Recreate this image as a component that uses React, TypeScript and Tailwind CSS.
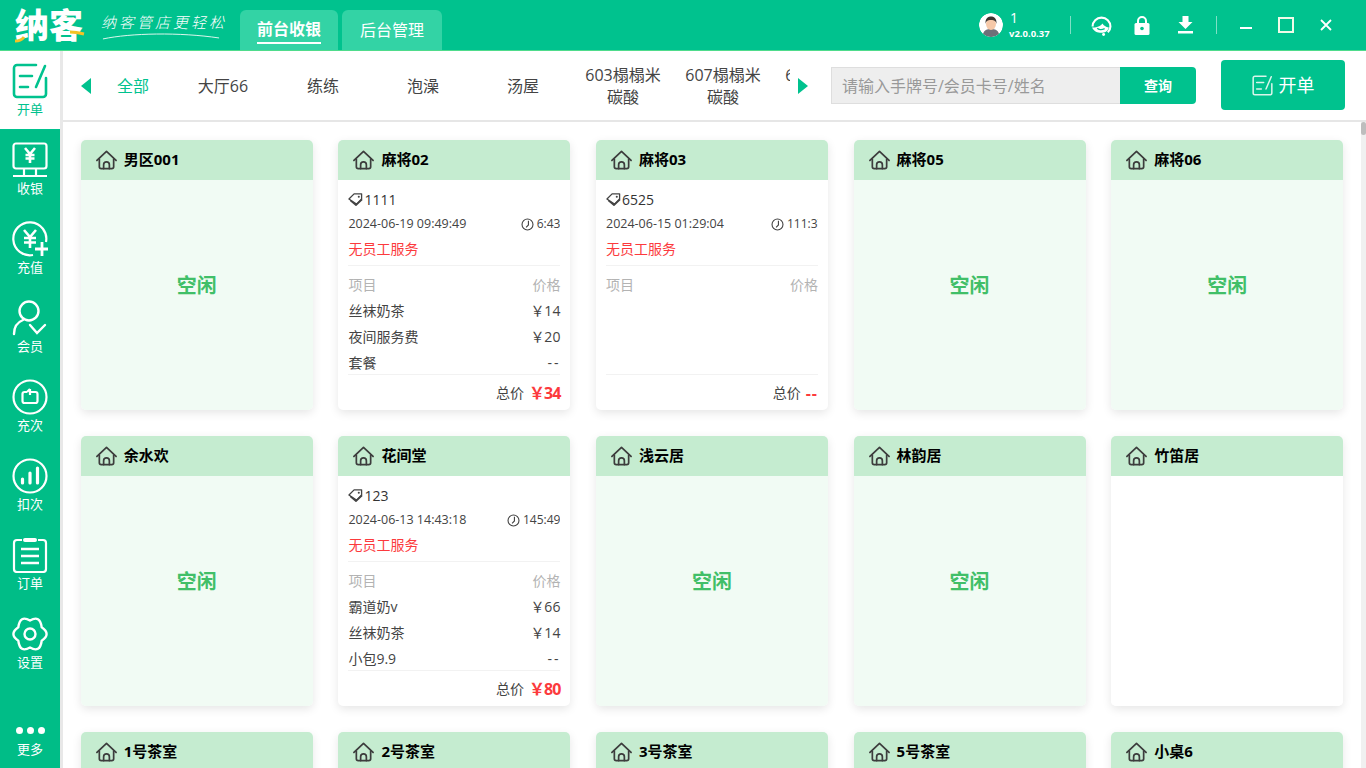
import React from 'react';

const font = { fontFamily: '"Open Sans", "Noto Sans CJK SC", sans-serif' };

interface IconPropsI {
  className?: string;
}

const OrderIcon: React.FC<IconPropsI> = ({ className }) => (
  <svg viewBox="0 0 36 36" className={className} fill="none" stroke="currentColor" strokeWidth="2.6" strokeLinecap="round" strokeLinejoin="round">
    <path d="M24 2H5a3 3 0 0 0-3 3v26a3 3 0 0 0 3 3h26a3 3 0 0 0 3-3V15" />
    <path d="M8 13h12M8 24h8M33 3l-9 21" />
  </svg>
);

const CashIcon: React.FC<IconPropsI> = ({ className }) => (
  <svg viewBox="0 0 36 36" className={className} fill="none" stroke="currentColor" strokeWidth="2.2">
    <rect x="1.500" y="1.500" width="33" height="25" rx="2.500" />
    <path d="M1 34h34M12 27v7M24 27v7" />
    <path d="M13 6l5 6 5-6M18 12v9M13.500 13h9M13.500 16.500h9" strokeWidth="2.600" />
  </svg>
);

const RechargeIcon: React.FC<IconPropsI> = ({ className }) => (
  <svg viewBox="0 0 36 36" className={className} fill="none" stroke="currentColor" strokeWidth="2.2">
    <path d="M21 34a16.500 16.500 0 1 1 13-13" />
    <path d="M12 9l6 7 6-7M18 16v11M12 17h12M12 21.500h12" strokeWidth="2.600" />
    <path d="M30 21v14M23 28h13" strokeWidth="2.800" />
  </svg>
);

const MemberIcon: React.FC<IconPropsI> = ({ className }) => (
  <svg viewBox="0 0 36 36" className={className} fill="none" stroke="currentColor" strokeWidth="2.400" strokeLinecap="round">
    <circle cx="17" cy="11" r="9.500" />
    <path d="M2 34c0-8 4-12 9-14M18 25l7 8 8-8" />
  </svg>
);

const TimesIcon: React.FC<IconPropsI> = ({ className }) => (
  <svg viewBox="0 0 36 36" className={className} fill="none" stroke="currentColor" strokeWidth="2.200">
    <circle cx="18" cy="18" r="16.500" />
    <path d="M15 13h-2.500a2 2 0 0 0-2 2v7a2 2 0 0 0 2 2h11a2 2 0 0 0 2-2v-7a2 2 0 0 0-2-2H18" />
    <path d="M18 10v6M18 10l-3 3" />
  </svg>
);

const DeductIcon: React.FC<IconPropsI> = ({ className }) => (
  <svg viewBox="0 0 36 36" className={className} fill="none" stroke="currentColor" strokeWidth="2.200">
    <circle cx="18" cy="18" r="16.500" />
    <path d="M10.500 21v4M18 15v10M25.500 10v15" strokeWidth="3.200" strokeLinecap="round" />
  </svg>
);

const ListIcon: React.FC<IconPropsI> = ({ className }) => (
  <svg viewBox="0 0 36 36" className={className} fill="none" stroke="currentColor" strokeWidth="2.200">
    <path d="M10 3H5a3 3 0 0 0-3 3v26a3 3 0 0 0 3 3h26a3 3 0 0 0 3-3V6a3 3 0 0 0-3-3h-5" />
    <path d="M13 3h10" strokeWidth="4" strokeLinecap="round" />
    <path d="M9 12h18M9 19h18M9 26h18" strokeWidth="2.400" />
  </svg>
);

const GearIcon: React.FC<IconPropsI> = ({ className }) => (
  <svg viewBox="0 0 36 36" className={className} fill="none" stroke="currentColor" strokeWidth="2.400" strokeLinejoin="round">
    <path d="M18 4.500Q28 -1.500 29.700 11.250 39.500 18 29.700 24.750 28 37.500 18 31.500 8 37.500 6.300 24.750-3.500 18 6.300 11.250 8-1.500 18 4.500z" />
    <circle cx="18" cy="18" r="5.500" />
  </svg>
);

const HomeIcon: React.FC<IconPropsI> = ({ className }) => (
  <svg viewBox="0 0 22 20" className={className} fill="none" stroke="#3d3d3d" strokeWidth="1.800" strokeLinecap="round" strokeLinejoin="round">
    <path d="M1 10.500 11 1l10 9.500" />
    <path d="M3.500 9v8a2 2 0 0 0 2 2h11a2 2 0 0 0 2-2V9" />
    <path d="M8 19v-4a3 3 0 0 1 6 0v4" />
  </svg>
);

const TagIcon: React.FC = () => (
  <svg viewBox="0 0 16 14" className="w-[15px] h-[14px] shrink-0" fill="none" stroke="#444" strokeLinejoin="round">
    <path d="M1 7 6.500 1.500h8V7L9 12.500z" strokeWidth="1.400" />
    <path d="M2.500 8.500 8.500 13.500 15 7.500" strokeWidth="1.800" />
    <circle cx="11.500" cy="4.500" r="1.100" fill="#444" stroke="none" />
  </svg>
);

const ClockIcon: React.FC = () => (
  <svg viewBox="0 0 14 14" className="w-[13px] h-[13px] shrink-0" fill="none" stroke="#444" strokeWidth="1.200">
    <circle cx="7" cy="7" r="5.900" />
    <path d="M8 3v4.500L5.500 10" />
  </svg>
);

const sideItems = [
  { label: '收银', icon: CashIcon },
  { label: '充值', icon: RechargeIcon },
  { label: '会员', icon: MemberIcon },
  { label: '充次', icon: TimesIcon },
  { label: '扣次', icon: DeductIcon },
  { label: '订单', icon: ListIcon },
  { label: '设置', icon: GearIcon },
];

const tabs = ['大厅66', '练练', '泡澡', '汤屋', '603榻榻米碳酸', '607榻榻米碳酸', '608榻榻米碳酸'];

interface RoomI {
  name: string;
  status?: 'idle' | 'blank';
  tag?: string;
  start?: string;
  time?: string;
  clipTime?: boolean;
  items?: [string, string][];
  total?: string;
}

const rooms: RoomI[] = [
  { name: '男区001', status: 'idle' },
  {
    name: '麻将02',
    tag: '1111',
    start: '2024-06-19 09:49:49',
    time: '6:43',
    items: [['丝袜奶茶', '￥14'], ['夜间服务费', '￥20'], ['套餐', '--']],
    total: '￥34',
  },
  { name: '麻将03', tag: '6525', start: '2024-06-15 01:29:04', time: '111:37', clipTime: true, items: [], total: '--' },
  { name: '麻将05', status: 'idle' },
  { name: '麻将06', status: 'idle' },
  { name: '余水欢', status: 'idle' },
  {
    name: '花间堂',
    tag: '123',
    start: '2024-06-13 14:43:18',
    time: '145:49',
    items: [['霸道奶v', '￥66'], ['丝袜奶茶', '￥14'], ['小包9.9', '--']],
    total: '￥80',
  },
  { name: '浅云居', status: 'idle' },
  { name: '林韵居', status: 'idle' },
  { name: '竹笛居', status: 'blank' },
  { name: '1号茶室', status: 'idle' },
  { name: '2号茶室', status: 'idle' },
  { name: '3号茶室', status: 'idle' },
  { name: '5号茶室', status: 'idle' },
  { name: '小桌6', status: 'idle' },
];

const RoomCard: React.FC<{ room: RoomI }> = ({ room }) => (
  <div className="h-[270px] shrink-0 rounded-[5px] overflow-hidden bg-white flex flex-col shadow-[0_3px_10px_rgba(0,0,0,0.10)]">
    <div className="h-10 shrink-0 bg-[#c5ecd0] flex items-center pl-[15px] gap-[7px]">
      <HomeIcon className="w-[21px] h-5" />
      <span className="text-[15px] leading-5 pb-[2px] font-bold text-black">{room.name}</span>
    </div>
    {room.status === 'idle' && (
      <div className="flex-1 bg-[#f1fbf4] flex items-center justify-center pb-[18px] text-[20px] font-bold text-[#41bf68]">
        空闲
      </div>
    )}
    {room.status === 'blank' && <div className="flex-1 bg-white" />}
    {!room.status && (
      <div className="flex-1 flex flex-col px-[10px] overflow-hidden">
        <div className="h-[34px] shrink-0 flex items-center gap-px pt-[4px] text-[14px] text-[#333]">
          <TagIcon />
          <span>{room.tag}</span>
        </div>
        <div className="h-5 shrink-0 flex items-center justify-between text-[12px] text-[#444] whitespace-nowrap">
          <span className="text-[12.5px]">{room.start}</span>
          <span className={`flex items-center gap-[3px] overflow-hidden ${room.clipTime ? 'w-[47px]' : ''}`}>
            <ClockIcon />
            <span className="shrink-0">{room.time}</span>
          </span>
        </div>
        <div className="h-[32px] shrink-0 flex items-center pb-[2px] text-[14px] text-[#fc3a3d] border-b border-[#f2f2f2]">
          无员工服务
        </div>
        <div className="h-[109px] shrink-0 flex flex-col border-b border-[#f2f2f2] pt-[5px] text-[14px] text-[#444]">
          <div className="h-[26px] shrink-0 flex items-center justify-between text-[#b3b3b3]">
            <span>项目</span>
            <span>价格</span>
          </div>
          {room.items?.map(([label, price]) => (
            <div key={label} className="h-[26px] shrink-0 flex items-center justify-between">
              <span>{label}</span>
              <span className={price === '--' ? 'tracking-[2px]' : ''}>{price}</span>
            </div>
          ))}
        </div>
        <div className="flex-1 flex items-center justify-end gap-[5px] text-[14px] text-[#444]">
          <span>总价</span>
          <span className={`text-[16px] font-bold text-[#fc3a3d] ${room.total === '--' ? 'tracking-[1px]' : 'tracking-[-1px]'}`}>
            {room.total}
          </span>
        </div>
      </div>
    )}
  </div>
);

const HeaderBar: React.FC = () => (
  <header className="h-[51px] shrink-0 bg-[#00c28e] border-b border-[#4fdc8c] flex items-end text-white">
    <div className="relative w-[100px] self-stretch flex items-center pl-[15px]">
      <span className="text-[34px] leading-none font-black">纳客</span>
      <svg viewBox="0 0 72 16" className="absolute left-[14px] top-[28px] w-[72px] h-4" fill="none" stroke="#f3c326" strokeWidth="3">
        <path d="M1 13c4 0 7-1 9-4M56 4c5 0 10 1 14 2" />
      </svg>
    </div>
    <div className="w-[140px] self-stretch flex flex-col pt-[12px] pl-[1px]">
      <span className="text-[15px] leading-[20px] italic font-light tracking-[3px] whitespace-nowrap">纳客管店更轻松</span>
      <svg viewBox="0 0 124 8" className="w-[122px] h-2" fill="none" stroke="#dff7ee" strokeWidth="1">
        <path d="M2 7C30 1 80 0 120 6" />
      </svg>
    </div>
    <div className="w-[98px] h-10 rounded-t-[6px] bg-[#33d3a5] flex items-center justify-center">
      <span className="text-[16px] font-bold leading-[25px] border-b-2 border-white">前台收银</span>
    </div>
    <div className="ml-1 w-[100px] h-10 rounded-t-[6px] bg-[#33d3a5] flex items-center justify-center text-[16px]">
      后台管理
    </div>
    <div className="flex-1" />
    <div className="self-stretch flex items-center pr-[34px]">
      <svg viewBox="0 0 24 24" className="w-6 h-6 rounded-full">
        <circle cx="12" cy="12" r="12" fill="#fff" />
        <path d="M4 21c1-4 4-5 8-5s7 1 8 5a12 12 0 0 1-16 0z" fill="#6d6f78" />
        <ellipse cx="12" cy="11" rx="5" ry="6" fill="#f6c8a8" />
        <path d="M6.500 11c-.5-6 3-7.500 5.500-7.500s6 1.500 5.500 7.500c-.5-3-2-4-5.500-4s-5 1-5.500 4z" fill="#3b3430" />
      </svg>
      <div className="ml-[6px] w-[61px] flex flex-col pb-[1px]">
        <span className="text-[14px] leading-[18px] pl-[1px]">1</span>
        <span className="text-[9.5px] leading-[14px] font-bold" style={{ fontFamily: '"Noto Sans", sans-serif' }}>v2.0.0.37</span>
      </div>
      <div className="w-px h-[18px] bg-[#7fe0c6]" />
      <svg viewBox="0 0 20 20" className="ml-[20px] w-[21px] h-[21px]" fill="none" stroke="#fff">
        <path d="M1.500 11a8.500 8.500 0 0 1 17 0c0 2.500-1 4-2.500 5.500" strokeWidth="2" />
        <path d="M1 12c3 0 8-1 10-4 1 2 3 3 6 4-1 4-4 5-7 5-4 0-7-1-9-5z" fill="#fff" stroke="none" />
        <path d="M6 12.500c1 1.500 4 2 7 .5" stroke="#00c28e" strokeWidth="1.300" />
        <circle cx="12" cy="18.500" r="1.400" fill="#fff" stroke="none" />
      </svg>
      <svg viewBox="0 0 16 20" className="ml-[22px] w-4 h-5" fill="none">
        <path d="M4 9V6a4 4 0 0 1 8 0v3" stroke="#fff" strokeWidth="2" />
        <rect x="0.500" y="8" width="15" height="12" rx="1.500" fill="#fff" />
        <circle cx="8" cy="13.500" r="1.800" fill="#00c28e" />
      </svg>
      <svg viewBox="0 0 16 18" className="ml-[27px] w-[17px] h-[18px]" fill="#fff">
        <path d="M5 0h6v6h4l-7 7-7-7h4z" />
        <rect x="0.500" y="15" width="15" height="2.500" />
      </svg>
      <div className="ml-[22px] w-px h-[18px] bg-[#7fe0c6]" />
      <div className="ml-[23px] w-3 h-[2px] mt-[6px] bg-white" />
      <div className="ml-[26px] w-[16px] h-[16px] border-2 border-[#f0fbe8]" />
      <svg viewBox="0 0 12 12" className="ml-[26px] w-3 h-3" fill="none" stroke="#fff" strokeWidth="1.800">
        <path d="M1 1l10 10M11 1 1 11" />
      </svg>
    </div>
  </header>
);

const SideBar: React.FC = () => (
  <aside className="w-[60px] shrink-0 bg-[#00bd87] flex flex-col text-white">
    <button className="h-[79px] shrink-0 bg-white text-[#00c28e] flex flex-col items-center pt-[12px] border-b border-[#00c28e]">
      <OrderIcon className="w-9 h-9" />
      <span className="text-[13px] leading-[18px] mt-[1px]">开单</span>
    </button>
    {sideItems.map(({ label, icon: Icon }) => (
      <button key={label} className="h-[79px] shrink-0 flex flex-col items-center pt-[12px]">
        <Icon className="w-9 h-9" />
        <span className="text-[13px] leading-[18px] mt-[1px]">{label}</span>
      </button>
    ))}
    <div className="flex-1" />
    <button className="h-[50px] shrink-0 flex flex-col items-center pt-[7px]">
      <span className="flex gap-[4px] h-[10px] items-center">
        <i className="w-[7px] h-[7px] rounded-full bg-white" />
        <i className="w-[7px] h-[7px] rounded-full bg-white" />
        <i className="w-[7px] h-[7px] rounded-full bg-white" />
      </span>
      <span className="text-[13px] leading-[18px] mt-[5px]">更多</span>
    </button>
  </aside>
);

const TopBar: React.FC = () => (
  <div className="h-[71px] shrink-0 bg-white border-b-2 border-[#e6e6e6] flex items-center pl-[18px]">
    <div className="w-0 h-0 shrink-0 border-y-[8px] border-y-transparent border-r-[10px] border-r-[#00c28e]" />
    <div className="w-[697px] shrink-0 ml-[2px] flex items-center overflow-hidden">
      <div className="w-20 shrink-0 text-center text-[16px] leading-[22px] text-[#00c28e]">全部</div>
      {tabs.map((tab) => (
        <div key={tab} className="w-[100px] shrink-0 px-[10px] text-center text-[16px] leading-[22px] text-[#444]">
          {tab}
        </div>
      ))}
    </div>
    <div className="ml-2 w-0 h-0 shrink-0 border-y-[8px] border-y-transparent border-l-[10px] border-l-[#00c28e]" />
    <div className="ml-[23px] flex h-[37px] w-[365px] shrink-0">
      <input
        readOnly
        placeholder="请输入手牌号/会员卡号/姓名"
        className="w-[289px] bg-[#eeeeee] border border-[#dedede] border-r-0 pl-[10px] text-[16px] outline-none placeholder:text-[#999]"
      />
      <button className="w-[76px] bg-[#00c28e] rounded-r-[4px] text-white text-[14px] font-bold">查询</button>
    </div>
    <button className="ml-[25px] w-[124px] h-[50px] shrink-0 bg-[#00c28e] rounded-[4px] flex items-center justify-center gap-[6px] text-white text-[18px] mb-[1px]">
      <OrderIcon className="w-[21px] h-[21px] text-[#d8f5ea]" />
      开单
    </button>
  </div>
);

const App: React.FC = () => (
  <div className="w-[1366px] h-[768px] flex flex-col overflow-hidden bg-white" style={font}>
    <HeaderBar />
    <div className="flex-1 min-h-0 flex">
      <SideBar />
      <div className="w-[3px] shrink-0 bg-[#e8e8e8]" />
      <main className="flex-1 min-w-0 flex flex-col">
        <TopBar />
        <div className="flex-1 min-h-0 flex">
          <div className="flex-1 min-w-0 overflow-hidden pt-[18px] pl-[17.8px]">
            <div className="grid grid-cols-[repeat(5,232px)] gap-x-[25.6px] gap-y-[26px]">
              {rooms.map((room) => (
                <RoomCard key={room.name} room={room} />
              ))}
            </div>
          </div>
          <div className="w-[5px] shrink-0 bg-[#f0f0f0]">
            <div className="h-[13px] rounded-full bg-[#bdbdbd]" />
          </div>
        </div>
      </main>
    </div>
  </div>
);

export default App;
